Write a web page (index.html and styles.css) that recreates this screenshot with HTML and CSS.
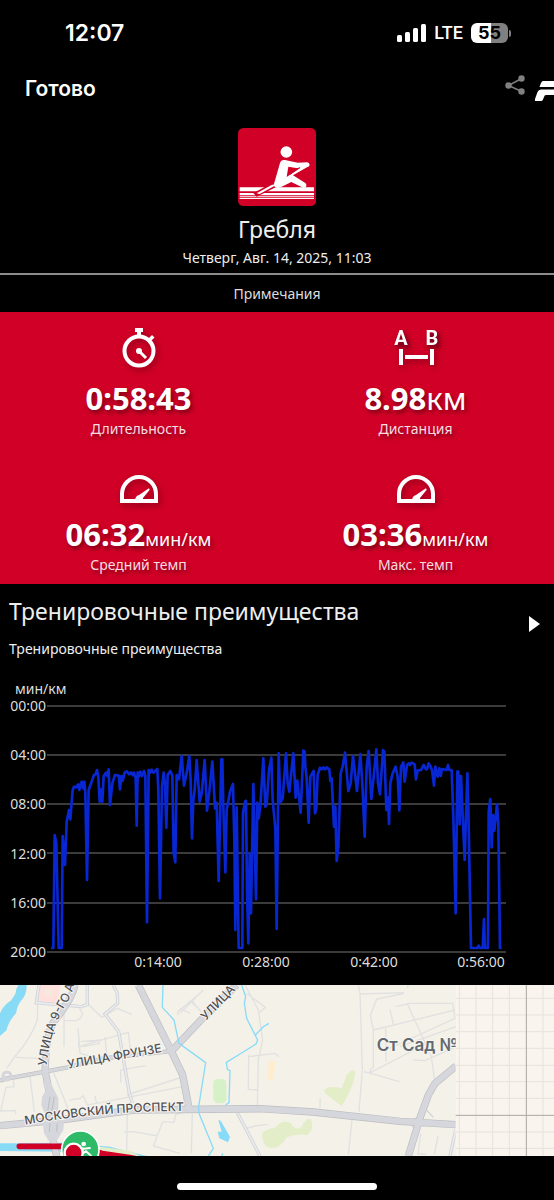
FILE: index.html
```html
<!DOCTYPE html>
<html lang="ru">
<head>
<meta charset="utf-8">
<meta name="viewport" content="width=device-width, initial-scale=1">
<title>Гребля</title>
<link rel="stylesheet" href="styles.css">
</head>
<body>
<div class="screen">
  <div class="status">
    <span class="time">12:07</span>
    <div class="status-right">
      <svg class="signal" viewBox="0 0 29 18" aria-hidden="true">
        <rect x="0" y="11" width="5" height="7" rx="1.5"/><rect x="8" y="8" width="5" height="10" rx="1.5"/><rect x="16" y="4" width="5" height="14" rx="1.5"/><rect x="24" y="0" width="5" height="18" rx="1.5"/>
      </svg>
      <span class="network">LTE</span>
      <span class="battery"><span class="level">55</span><span class="nub"></span></span>
    </div>
  </div>

  <nav class="nav">
    <button class="done" type="button">Готово</button>
    <div class="nav-right">
      <button class="share" type="button" aria-label="Поделиться">
        <svg viewBox="0 0 20 20" aria-hidden="true"><path d="M16.500 3.500 3.500 10.500 16.500 16.500" fill="none" stroke="#808080" stroke-width="1.500"/><circle cx="16.500" cy="3.500" r="3.200"/><circle cx="3.500" cy="10.500" r="3.200"/><circle cx="16.500" cy="16.500" r="3.200"/></svg>
      </button>
      <svg class="brand" viewBox="0 0 19 20" aria-hidden="true"><path d="M8 0H19V6H4.500L6 2Q7 0 8 0ZM6 8.500H19V14H11Q9.500 14 9 16L8 18.500Q7.500 20 6 20H0.500Q-.500 20 0 18L2.500 11Q3.500 8.500 6 8.500Z"/></svg>
    </div>
  </nav>

  <header class="summary">
    <svg class="sport" viewBox="0 0 234 234" aria-hidden="true">
      <rect width="234" height="234" rx="16" fill="#d10026"/>
      <path d="M5 178H228V190H5ZM5 195H228V201H5ZM5 203H228V206H5ZM5 209H228V213H5Z" fill="#fff"/>
      <path d="M106 163 46 195 56 206 116 176Z" fill="#d10026"/>
      <path d="M102 170 56 196 65 198 116 170Z" fill="#fff"/>
      <circle cx="145" cy="72" r="17.500" fill="#fff"/>
      <path d="M126 105Q129 94 141 96L179 104 207 103Q215 104 215 111 214 117 207 118L165 142 202 165Q208 171 203 178 198 182 192 178L160 162 128 178Q115 184 108 174 106 169 109 164Z" fill="#fff"/>
      <path d="M151 116 174 120Q181 121 188 118L146 147Z" fill="#d10026"/>
      <path d="M186 119 156 139" stroke="#d10026" stroke-width="3"/>
    </svg>
    <h1>Гребля</h1>
    <p class="date">Четверг, Авг. 14, 2025, 11:03</p>
  </header>
  <div class="notes">Примечания</div>

  <section class="metrics">
    <div class="metric">
      <svg class="icon" viewBox="0 0 40 40" aria-hidden="true">
        <circle cx="20" cy="23" r="14.500" fill="none" stroke="#fff" stroke-width="4"/>
        <path d="M16 0H24V4H22V8H18V4H16Z"/><path d="M29 11 33 7 35.500 9.500 31.500 13.500Z"/>
        <circle cx="20" cy="23" r="3"/><path d="M20 23 27 30" stroke="#fff" stroke-width="3"/>
      </svg>
      <div class="value">0:58:43</div>
      <div class="label">Длительность</div>
    </div>
    <div class="metric">
      <svg class="icon wide" viewBox="0 0 44 40" aria-hidden="true">
        <text class="ab" x="7" y="17">A</text><text class="ab" x="38" y="17">B</text>
        <path d="M5 21H9V37H5ZM36 21H40V37H36ZM11 27H34V31H11Z"/>
      </svg>
      <div class="value">8.98<span class="unit-large">км</span></div>
      <div class="label">Дистанция</div>
    </div>
    <div class="metric">
      <svg class="icon" viewBox="0 0 40 40" aria-hidden="true"><path d="M3 37V30A17 17 0 0 1 37 30V37Z" fill="none" stroke="#fff" stroke-width="4"/><path d="M16 37Q16 32 20 31L29.500 24.500Q31 24 30.500 26L24 34V37Z"/></svg>
      <div class="value">06:32<span class="unit">мин/км</span></div>
      <div class="label">Средний темп</div>
    </div>
    <div class="metric">
      <svg class="icon" viewBox="0 0 40 40" aria-hidden="true"><path d="M3 37V30A17 17 0 0 1 37 30V37Z" fill="none" stroke="#fff" stroke-width="4"/><path d="M16 37Q16 32 20 31L29.500 24.500Q31 24 30.500 26L24 34V37Z"/></svg>
      <div class="value">03:36<span class="unit">мин/км</span></div>
      <div class="label">Макс. темп</div>
    </div>
  </section>

  <a class="benefit" href="#benefit">
    <span class="benefit-text"><span class="benefit-title">Тренировочные преимущества</span><span class="benefit-sub">Тренировочные преимущества</span></span>
    <svg class="arrow" viewBox="0 0 11 16" aria-hidden="true"><path d="M0 0 11 8 0 16Z"/></svg>
  </a>

  <svg class="chart" viewBox="0 675 554 310" role="img" aria-label="Темп, мин/км">
    <path class="grid" d="M47 706H506M47 755H506M47 804H506M47 853H506M47 903H506M47 952H506"/>
    <text x="15" y="694">мин/км</text>
    <g class="y-axis"><text x="46" y="711">00:00</text><text x="46" y="760">04:00</text><text x="46" y="809">08:00</text><text x="46" y="859">12:00</text><text x="46" y="908">16:00</text><text x="46" y="957">20:00</text></g>
    <g class="x-axis"><text x="158" y="967">0:14:00</text><text x="266" y="967">0:28:00</text><text x="374" y="967">0:42:00</text><text x="481" y="967">0:56:00</text></g>
    <g transform="translate(0 740) scale(.33333)">
      <polyline class="pace" points="153,624 160,624 164,285 169,310 176,624 185,624 188,288 195,375 200,245 207,210 211,238 218,150 222,140 228,142 235,133 238,150 245,125 249,145 253,125 256,160 261,420 266,150 275,125 282,105 287,103 291,90 295,110 299,185 303,148 307,185 311,108 318,98 322,108 326,88 330,195 337,130 345,105 356,107 360,148 364,108 368,122 374,98 380,94 388,103 393,97 398,105 402,98 407,115 410,257 413,97 417,110 421,95 426,108 432,93 436,108 441,547 446,90 451,98 455,89 460,98 472,87 475,150 480,475 486,140 491,98 495,130 499,263 503,105 511,93 517,107 521,340 526,367 530,105 537,118 545,48 552,137 560,100 568,48 572,120 576,295 580,180 584,150 590,60 595,130 599,185 605,160 614,60 621,212 628,155 637,65 642,150 645,205 650,188 656,423 664,58 667,58 670,200 676,397 680,210 690,155 699,132 703,300 706,570 710,202 716,624 727,624 729,220 735,185 738,182 741,450 745,610 749,340 753,520 756,350 760,132 768,478 772,188 776,235 781,200 790,55 796,200 800,195 807,90 814,53 818,180 826,265 830,567 836,40 841,187 848,175 858,40 863,130 868,155 880,40 887,173 892,122 902,218 910,32 914,35 916,80 920,115 926,248 931,110 941,93 945,220 949,205 953,105 960,83 965,88 970,82 975,88 980,82 988,88 991,122 995,115 1002,260 1006,200 1010,363 1015,320 1022,100 1028,80 1035,38 1045,153 1052,130 1059,48 1071,153 1081,42 1087,130 1094,290 1100,80 1106,33 1114,177 1121,110 1129,28 1134,130 1140,163 1149,30 1153,35 1159,210 1164,172 1167,252 1171,130 1178,100 1187,80 1193,110 1198,211 1203,80 1210,67 1214,125 1221,75 1227,70 1230,75 1235,68 1244,73 1248,118 1253,92 1263,90 1271,75 1278,88 1282,85 1286,70 1291,78 1296,90 1302,137 1306,80 1313,110 1318,85 1322,108 1326,87 1340,90 1344,75 1348,90 1355,90 1360,230 1367,520 1372,95 1375,95 1379,253 1383,108 1394,360 1402,100 1405,200 1413,624 1432,624 1436,617 1440,624 1448,624 1452,537 1455,624 1464,624 1466,215 1471,177 1475,322 1479,225 1483,272 1491,193 1495,250 1500,624 1505,624"/>
    </g>
  </svg>

  <svg class="map" viewBox="0 15 1662 513" role="img" aria-label="Карта маршрута">
    <rect class="land" y="15" width="1662" height="513"/>
    <path class="water" d="M55 15H80Q80 45 65 60 52 75 48 100 25 125 20 150L0 168V100Q10 75 32 62 50 40 48 30ZM0 490H60L200 488 330 500 440 528H330L200 515 0 513Z"/>
    <path class="park" d="M185 478Q270 478 300 500L390 512 420 528H300ZM973 330Q985 315 1025 325L1040 285Q1058 265 1066 275 1062 320 1025 378 1010 368 975 340ZM787 460Q800 445 825 445 845 415 873 430 885 455 905 440 920 410 933 418 945 450 920 465 890 460 860 472 835 515 800 500 785 485 787 460ZM1062 272Q1070 280 1062 292Z"/>
    <rect x="640" y="297" width="39" height="73" rx="14" fill="#d6f0c7"/>
    <path d="M806 243 827 245 820 302 800 299Z" fill="#ffedcf"/>
    <path d="M121 15H182L172 70 117 64Z" fill="#ffe0dc"/><rect x="134" y="25" width="23" height="23" rx="6" fill="#f4eade"/>
    <g class="lane">
      <path d="M114 15 112 120Q90 180 48 225L20 265M48 232 130 236M192 90V122H230Q250 110 247 100L238 82M192 122V200M234 145 240 220 275 230M236 165V200L385 157 392 220M242 185 300 180 298 190 248 200M315 170 320 225M362 308V270L437 257M262 70 305 112 352 85 396 104M380 345 548 291M160 275 205 388M90 290 103 395M208 360 240 355 250 347 262 375 290 370 285 348M290 370 548 320M40 300 42 320 18 322 2 393 46 392 47 402M382 395 380 510M372 456 402 455 473 468M488 425 522 427 528 402 548 398M488 425 460 498 540 520M577 402 574 520M534 105V95L600 40M540 85 570 100M570 62 600 90M540 100 610 30M575 62 605 98M735 15 775 90 788 180 775 240 772 385M740 40 796 82 780 97M746 225 745 328 772 330M745 230 825 220 837 230M960 383V355M740 445 765 438 803 433M1075 15 1080 40 1087 270 1077 395M1080 42 1212 38 1205 42 1130 57 1111 105 1120 148V262L1111 268V278L1300 180M1056 420 1045 524M1092 275 1199 305M1120 150 1365 90M1187 80 1230 70H1358L1365 115 1158 210M1222 72 1265 165 1294 230 1303 295M1170 88 1180 132M1157 142 1158 245M1200 200 1368 140M1240 240 1275 242 1368 200M1262 460 1254 522H1278M1314 468 1303 524M1222 24 1225 15"/>
    </g>
    <g class="street-edge"><path d="M117 15 109 68 245 80 262 73V15M340 15 352 40 353 70 315 102 356 155 388 340 397 370M712 398 780 528M1367 450 1350 528"/></g>
    <g class="street"><path d="M117 15 109 68 245 80 262 73V15M340 15 352 40 353 70 315 102 356 155 388 340 397 370M712 398 780 528M1367 450 1350 528"/></g>
    <path class="street-edge" d="M1235 420 1264 408 1275 385M1235 425 1248 470M1275 385 1300 412"/>
    <g class="road-edge">
      <path d="M0 302 20 295 42 292 195 264 310 235 500 215 517 213"/><circle cx="21" cy="288" r="12"/>
      <path class="thick" d="M415 15 510 205 548 285 568 390M515 213 600 123 710 15M225 15Q215 60 165 120 135 160 136 275L150 350 150 440 170 528M0 437 180 420 400 390 780 386 940 396 1200 424 1368 434M1368 258 1305 310 1285 345 1262 408 1225 528"/>
    </g>
    <g class="road">
      <path d="M0 302 20 295 42 292 195 264 310 235 500 215 517 213"/><circle cx="21" cy="288" r="12"/>
      <path class="thick" d="M415 15 510 205 548 285 568 390M515 213 600 123 710 15M225 15Q215 60 165 120 135 160 136 275L150 350 150 440 170 528M0 437 180 420 400 390 780 386 940 396 1200 424 1368 434M1368 258 1305 310 1285 345 1262 408 1225 528"/>
    </g>
    <path d="M128 310H152L175 355V400L192 430 190 450 168 485 148 485 132 460 128 430 136 405 124 375 126 350 138 330Z" fill="#d6d7dc"/>
    <path d="M150 350 143 395M163 350 155 395M150 430 148 455M172 430 170 455" stroke="#bdbec4" stroke-width="3"/>
    <path class="stream" d="M489 15 487 82 522 120 537 190 617 248 596 380 597 400 640 505 625 528M725 15 737 50 733 70 740 115 773 180 768 192 720 222 679 247 682 268 690 272 687 368 677 375M766 165 790 140 807 130M669 520 665 528"/>
    <path class="water" d="M655 420 662 422 690 470 684 487 658 475 653 455H665Z"/>

    <g class="labels">
      <path id="street-9" d="M140 258Q150 145 205 62 225 25 230 -30" fill="none"/><text><textPath href="#street-9">УЛИЦА 9-ГО А</textPath></text>
      <text transform="translate(204 266) rotate(-10)">УЛИЦА ФРУНЗЕ</text>
      <path id="avenue" d="M76 434Q330 388 600 394" fill="none"/><text><textPath href="#avenue">МОСКОВСКИЙ ПРОСПЕКТ</textPath></text>
      <text transform="translate(617 123) rotate(-46)">УЛИЦА</text>
      <text class="place" x="1130" y="214">Ст Сад №</text>
    </g>
    <rect x="1367" y="15" width="295" height="513" fill="#f9f4ed"/>
    <path d="M1367 55H1662M1367 105H1662M1367 155H1662M1367 205H1662M1367 256H1662M1367 305H1662M1367 355H1662M1367 456H1662M1367 505H1662M1378 15V528M1428 15V528M1478 15V528M1528 15V528M1629 15V528" stroke="#e8e3dc" stroke-width="3"/>
    <path d="M1367 406H1662M1579 15V528" stroke="#aaa7a2" stroke-width="3"/>

    <path d="M58 499H230L300 518" fill="none" stroke="#d10026" stroke-width="17" stroke-linecap="round"/>
    <path d="M298 511 390 524 410 528H298Z" fill="#d10026"/>
    <circle cx="241" cy="509" r="56" fill="#2ebb68" stroke="#fff" stroke-width="5"/>
    <circle cx="251" cy="492" r="7" fill="#fff"/><path d="M236 502 250 506 272 504M250 504 244 522 258 514 274 528" fill="none" stroke="#fff" stroke-width="6"/>
    <circle cx="221" cy="518" r="27" fill="#d10026" stroke="#fff" stroke-width="7"/>
  </svg>

  <footer class="bottom"><span class="home"></span></footer>
</div>
</body>
</html>
```
FILE: styles.css
```css
* { box-sizing: border-box; }
body { margin: 0; background: #000; color: #fff; font-family: "Noto Sans", sans-serif; font-size: 14px; line-height: 20px; }
h1, p { margin: 0; font-weight: 400; }
button { border: 0; padding: 0; background: none; color: inherit; font: inherit; cursor: pointer; }
svg { display: block; fill: #fff; }
.screen { overflow: hidden; }

.status { display: flex; justify-content: space-between; align-items: center; height: 66px; padding: 0 43px 0 65px; font-family: Inter, sans-serif; }
.time { font-size: 23px; font-weight: 600; line-height: 28px; }
.status-right { display: flex; align-items: center; gap: 8px; }
.signal { width: 29px; height: 18px; }
.network { font-family: Roboto, sans-serif; font-size: 18px; font-weight: 500; line-height: 24px; }
.battery { display: flex; align-items: center; gap: 1px; }
.level { width: 37px; height: 20px; border-radius: 6px; background: linear-gradient(90deg, #fff 55%, #808080 55%); color: #000; font-size: 18px; font-weight: 700; text-align: center; }
.nub { width: 2px; height: 7px; border-radius: 0 3px 3px 0; background: #808080; }

.nav { display: flex; justify-content: space-between; align-items: center; height: 46px; padding-left: 25px; font-family: Inter, sans-serif; }
.done { font-size: 21px; font-weight: 600; line-height: 24px; }
.nav-right { display: flex; align-items: flex-start; gap: 10px; }
.share svg { width: 20px; height: 20px; fill: #808080; margin-bottom: 8px; }
.brand { width: 19px; height: 20px; margin-top: 6px; }

.summary { display: flex; flex-direction: column; align-items: center; padding-top: 16px; border-bottom: 2px solid #8c8c8c; color: #eee; }
.sport { width: 78px; height: 78px; }
h1 { margin-top: 7px; font-size: 23px; line-height: 32px; }
.date { margin: 3px 0 5px; }
.notes { padding: 9px 0 8px; text-align: center; color: #ddd; }

.metrics { display: grid; grid-template-columns: 1fr 1fr; background: #d10026; }
.metric { display: flex; flex-direction: column; align-items: center; height: 136px; padding-top: 16px; text-shadow: 2px 3px 4px rgba(0, 0, 0, .4); }
.icon { width: 40px; height: 40px; overflow: visible; filter: drop-shadow(2px 3px 3px rgba(0, 0, 0, .3)); }
.wide { width: 44px; }
.ab { font-family: Roboto, sans-serif; font-size: 20px; font-weight: 700; text-anchor: middle; }
.value { margin-top: 9px; font-size: 31px; font-weight: 700; line-height: 42px; }
.unit-large { font-weight: 400; }
.unit { font-size: 18px; font-weight: 400; line-height: 18px; }
.label { color: #f8dce1; }

.benefit { display: flex; justify-content: space-between; align-items: center; padding: 11px 14px 16px 9px; color: #eee; text-decoration: none; }
.benefit-text { display: flex; flex-direction: column; gap: 12px; }
.benefit-title { font-size: 23px; line-height: 32px; }
.arrow { width: 11px; height: 16px; margin-bottom: 6px; }

.chart { width: 100%; height: auto; }
.chart text { fill: #ddd; font-size: 14px; }
.grid { stroke: #777; stroke-width: 1; }
.y-axis { text-anchor: end; }
.x-axis { text-anchor: middle; }
.pace { fill: none; stroke: #0826d2; stroke-width: 8; stroke-linejoin: round; }

.map { width: 100%; height: auto; }
.land { fill: #f4f1e8; }
.water { fill: #88dbf7; }
.park { fill: #e3edc8; }
.lane { fill: none; stroke: #e0e1e0; stroke-width: 4; }
.street-edge { fill: none; stroke: #d0d2d7; stroke-width: 10; }
path.street-edge { stroke-width: 4; }
.street { fill: none; stroke: #eaebee; stroke-width: 5; }
.road-edge { fill: none; stroke: #bcbdc2; stroke-width: 13; }
.road { fill: none; stroke: #d6d7dc; stroke-width: 9; }
.road-edge .thick { stroke-width: 22; }
.road .thick { stroke-width: 18; }
.road circle, .road-edge circle { stroke-width: 8; }
.stream { fill: none; stroke: #88dbf7; stroke-width: 4; }
.labels { font-family: Inter, sans-serif; font-size: 36px; font-weight: 500; }
.labels text { fill: #505156; stroke: #f7f5f0; stroke-width: 6; paint-order: stroke; }
.labels .place { fill: #626970; font-size: 51px; font-weight: 600; }

.bottom { display: flex; justify-content: center; padding: 27px 0 10px; }
.home { width: 36%; height: 7px; border-radius: 4px; background: #fff; }
```
